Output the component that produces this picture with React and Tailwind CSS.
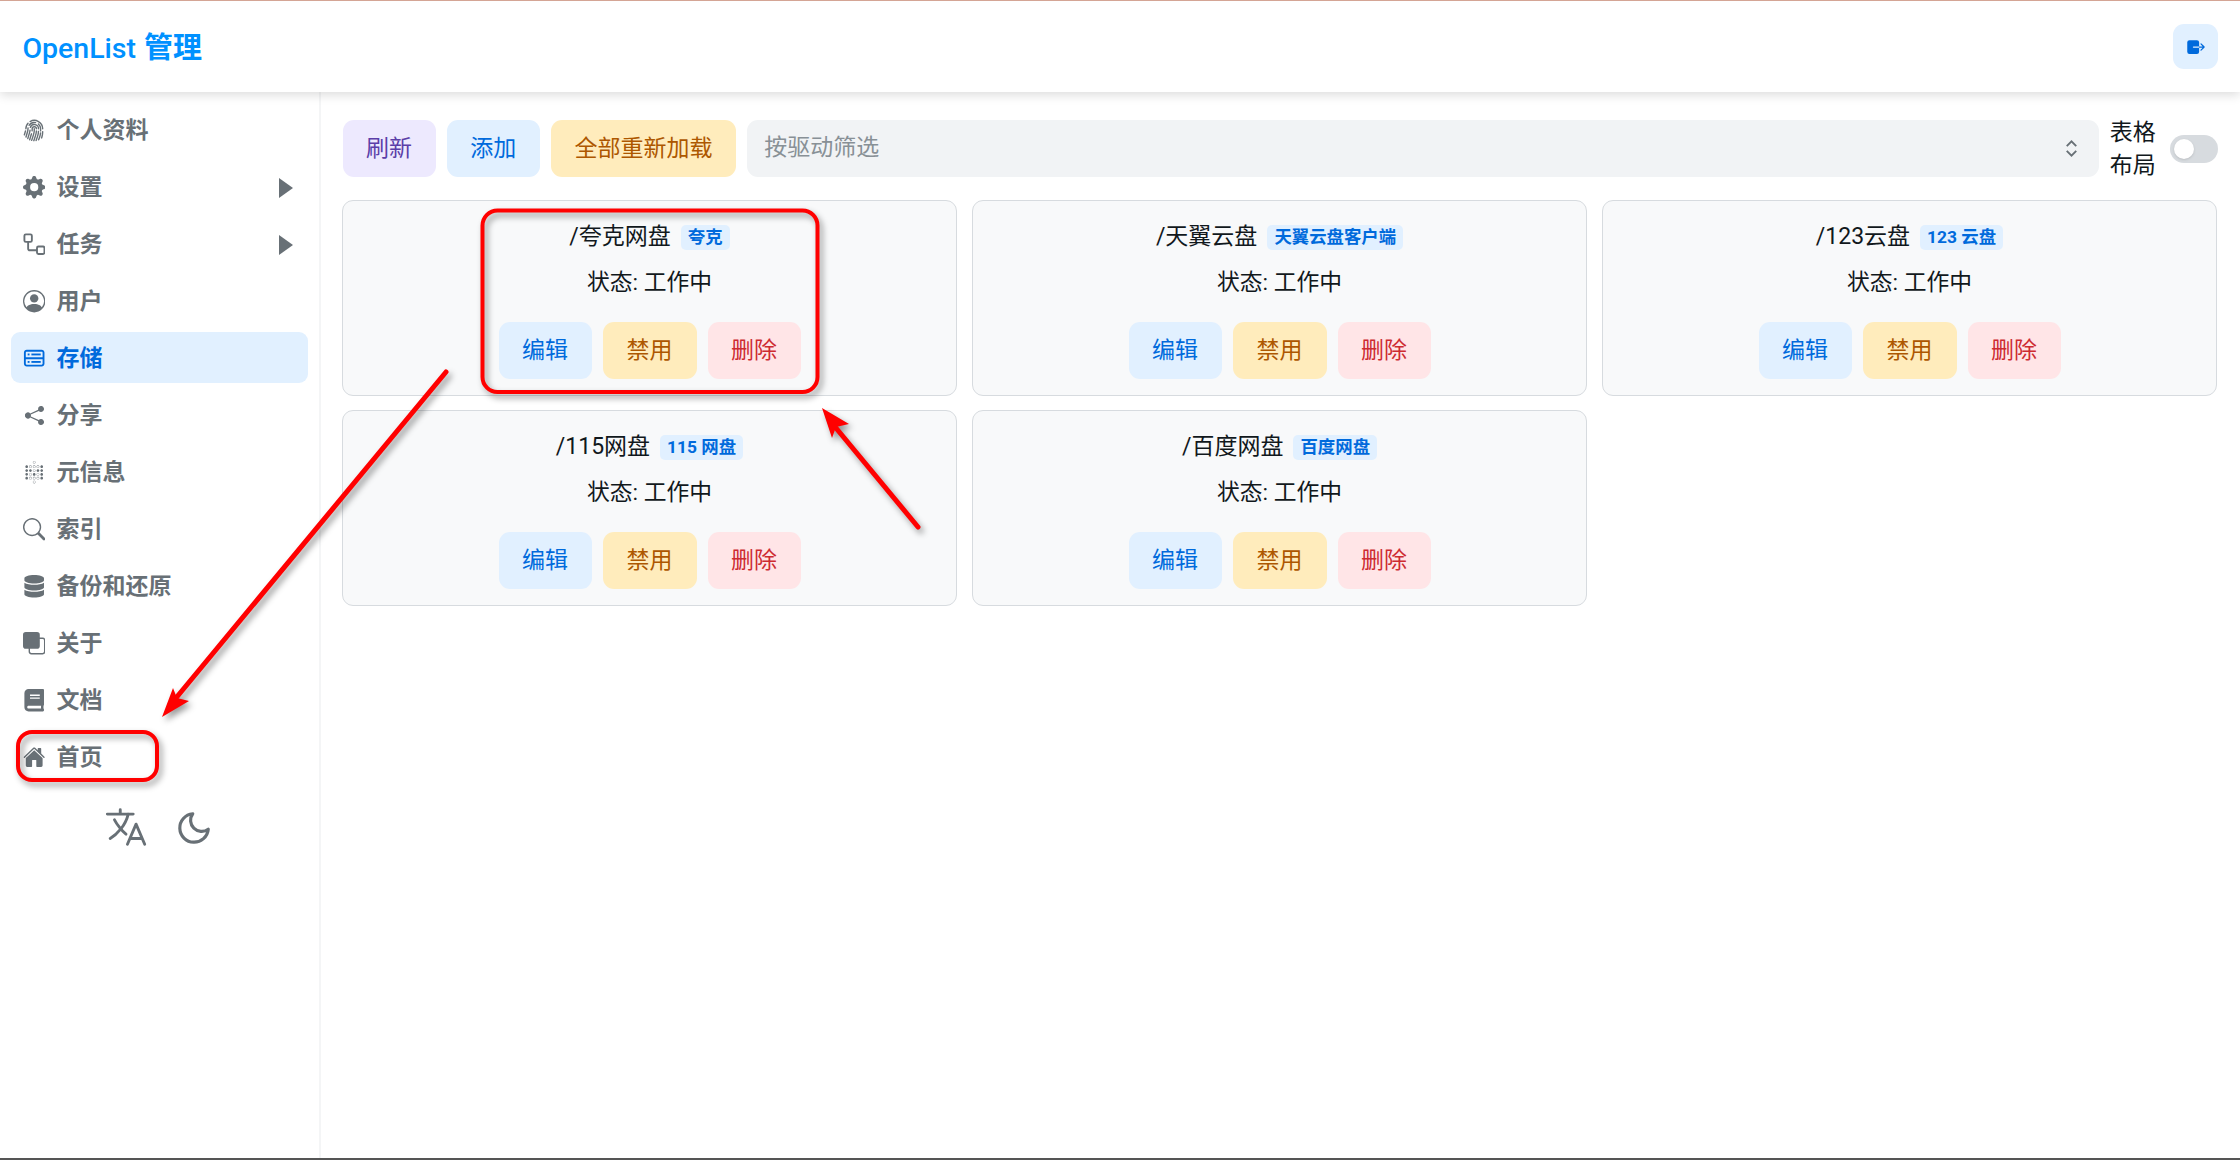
import React from "react";
import { BsFingerprint, BsGearFill, BsPersonCircle, BsShareFill, BsSearch, BsFront } from "react-icons/bs";
import { CgDatabase } from "react-icons/cg";
import { SiMetabase } from "react-icons/si";
import { FaDatabase, FaBook } from "react-icons/fa";
import { IoLanguageOutline, IoExit, IoHome } from "react-icons/io5";
import { FiMoon } from "react-icons/fi";

const font = "font-['Roboto','Noto_Sans_CJK_SC',sans-serif]";

function TaskIcon({ className }) {
  return (
    <svg viewBox="0 0 24 24" fill="none" stroke="currentColor" strokeWidth="2" className={className}>
      <rect x="1.5" y="1.5" width="8" height="8" rx="1.5" />
      <rect x="15" y="14.5" width="8" height="8" rx="1.5" />
      <path d="M5.5 9.5v7a2 2 0 0 0 2 2H15" />
    </svg>
  );
}

function Caret() {
  return (
    <svg viewBox="0 0 14 20" className="w-[14px] h-[20px] ml-auto mr-[15px] fill-[#687076]">
      <path d="M0 0 L14 10 L0 20 Z" />
    </svg>
  );
}

const menu = [
  { t: "个人资料", I: BsFingerprint },
  { t: "设置", I: BsGearFill, caret: true },
  { t: "任务", I: TaskIcon, caret: true },
  { t: "用户", I: BsPersonCircle },
  { t: "存储", I: CgDatabase, active: true },
  { t: "分享", I: BsShareFill, small: true },
  { t: "元信息", I: SiMetabase },
  { t: "索引", I: BsSearch },
  { t: "备份和还原", I: FaDatabase },
  { t: "关于", I: BsFront },
  { t: "文档", I: FaBook },
  { t: "首页", I: IoHome },
];

const storages = [
  { p: "/夸克网盘", d: "夸克" },
  { p: "/天翼云盘", d: "天翼云盘客户端" },
  { p: "/123云盘", d: "123 云盘" },
  { p: "/115网盘", d: "115 网盘" },
  { p: "/百度网盘", d: "百度网盘" },
];

function Btn({ className, children }) {
  return (
    <button className={`h-[57px] px-[20px] rounded-[11px] text-[23px] leading-none ${className}`}>
      {children}
    </button>
  );
}

function Card({ p, d }) {
  return (
    <div className="h-[195.5px] rounded-[11px] border border-[#d7dbdf] bg-[#f8f9fa] flex flex-col items-center pt-[22px]">
      <div className="h-[29px] flex items-center gap-[10px]">
        <span className="text-[23px] text-[#11181c]">{p}</span>
        <span className="h-[25px] px-[7px] rounded-[5px] bg-[#e1f0ff] text-[#006adc] text-[17.4px] font-bold flex items-center leading-none">
          {d}
        </span>
      </div>
      <div className="mt-[16px] h-[31px] flex items-center text-[22.8px] text-[#11181c]">状态: 工作中</div>
      <div className="mt-[23px] flex gap-[11px]">
        <Btn className="bg-[#e1f0ff] text-[#006adc] w-[93px]">编辑</Btn>
        <Btn className="bg-[#ffecbc] text-[#ad5700] w-[94px]">禁用</Btn>
        <Btn className="bg-[#ffe5e7] text-[#cd2b31] w-[93px]">删除</Btn>
      </div>
    </div>
  );
}

function Annotations() {
  return (
    <svg
      className="absolute left-0 top-0 pointer-events-none"
      width="2240"
      height="1160"
      style={{ filter: "drop-shadow(3px 4px 3px rgba(0,0,0,0.4))" }}
    >
      <rect x="482.5" y="209.5" width="335" height="181.5" rx="15" fill="none" stroke="#ff0000" strokeWidth="4" />
      <rect x="18" y="731" width="139" height="48" rx="14" fill="none" stroke="#ff0000" strokeWidth="4" />
      <path d="M446 371 L176 697" stroke="#ff0000" strokeWidth="5" strokeLinecap="round" />
      <path d="M162 716 L173 687 L177 697 L189 700 Z" fill="#ff0000" />
      <path d="M918 526 L836 427" stroke="#ff0000" strokeWidth="5" strokeLinecap="round" />
      <path d="M822 407 L849 423 L836 426 L832 437 Z" fill="#ff0000" />
    </svg>
  );
}

export default function App() {
  return (
    <div className={`${font} relative w-[2240px] h-[1160px] overflow-hidden bg-white flex flex-col border-t border-[#d4a595] border-b-2 border-b-[#555555]`}>
      <header className="relative z-10 h-[91px] shrink-0 bg-white flex items-center justify-between pl-[22.4px] pr-[22px] shadow-[0_3px_10px_rgba(0,0,0,0.14)]">
        <div className="text-[28.5px] font-medium text-[#0091ff] pt-[4px]">
          OpenList <span className="font-bold text-[29px] ml-[1px]">管理</span>
        </div>
        <button className="w-[45px] h-[45px] rounded-[11px] bg-[#e1f0ff] text-[#006adc] flex items-center justify-center">
          <IoExit className="w-[20px] h-[20px]" />
        </button>
      </header>
      <div className="flex flex-1 min-h-0">
        <aside className="w-[321px] shrink-0 border-r-2 border-[#f4f5f6] px-[11px] pt-[12px]">
          <nav className="flex flex-col gap-[6px]">
            {menu.map(({ t, I, caret, active, small }) => (
              <div
                key={t}
                className={`h-[51px] w-[297px] rounded-[9px] flex items-center pl-[12px] pt-[2px] text-[23px] font-bold ${
                  active ? "bg-[#e1f0ff] text-[#006adc]" : "text-[#687076]"
                }`}
              >
                <span className="w-[22.4px] h-[22.4px] flex items-center justify-center shrink-0">
                  <I className={small ? "w-[19px] h-[19px]" : "w-[22.4px] h-[22.4px]"} />
                </span>
                <span className="ml-[11.2px] pt-[2px]">{t}</span>
                {caret && <Caret />}
              </div>
            ))}
          </nav>
          <div className="mt-[22px] pr-[4px] flex justify-center items-center gap-[26px] text-[#687076]">
            <IoLanguageOutline className="w-[46px] h-[46px]" />
            <FiMoon className="w-[38px] h-[38px] mt-[2px]" />
          </div>
        </aside>
        <main className="flex-1 pl-[21px] pr-[22px] pt-[28px]">
          <div className="flex items-center gap-[11.2px] pl-[0.6px]">
            <Btn className="bg-[#ede9fe] text-[#5b3ea8] w-[93px]">刷新</Btn>
            <Btn className="bg-[#e1f0ff] text-[#006adc] w-[93px]">添加</Btn>
            <Btn className="bg-[#ffecbc] text-[#ad5700] w-[185px]">全部重新加载</Btn>
            <div className="flex-1 h-[57px] rounded-[11px] bg-[#f1f3f5] flex items-center justify-between pl-[17px] pr-[21px]">
              <span className="text-[23px] text-[#889096]">按驱动筛选</span>
              <svg viewBox="0 0 16 24" className="w-[13px] h-[19px]" fill="none" stroke="#687076" strokeWidth="2.4">
                <path d="M2 9 L8 3 L14 9 M2 15 L8 21 L14 15" />
              </svg>
            </div>
            <div className="w-[46px] -my-[6px] text-[23px] leading-[33px] text-[#11181c]">表格布局</div>
            <div className="ml-[3px] w-[48px] h-[28px] rounded-full bg-[#d7dbdf] flex items-center pl-[4px]">
              <span className="w-[20px] h-[20px] rounded-full bg-white shadow-sm" />
            </div>
          </div>
          <div className="mt-[23px] w-[1875px] grid grid-cols-3 gap-x-[15px] gap-y-[14.5px]">
            {storages.map((s) => (
              <Card key={s.p} {...s} />
            ))}
          </div>
        </main>
      </div>
      <Annotations />
    </div>
  );
}
